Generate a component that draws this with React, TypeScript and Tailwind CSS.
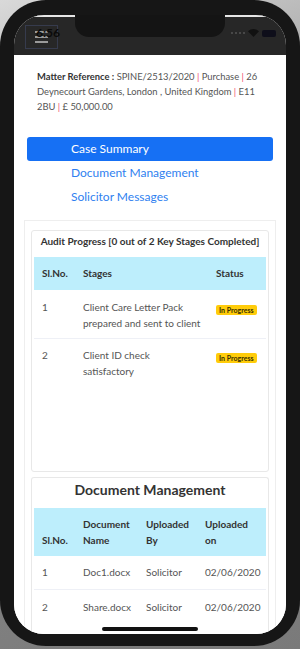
import React from "react";

const font = { fontFamily: "Lato, 'Open Sans', sans-serif" };

function Badge() {
  return (
    <span className="inline-block rounded-[2px] bg-[#ffcc0a] px-[3px] text-[7px] font-bold leading-[10px] text-[#3a3000]">
      In Progress
    </span>
  );
}

function Pipe() {
  return <span className="text-[#f0506e]">|</span>;
}

export default function App() {
  return (
    <div
      className="relative h-[649px] w-[300px] overflow-hidden bg-[linear-gradient(160deg,#d9d9d9_0%,#8a8a8a_40%,#7a7a7a_100%)]"
      style={font}
    >
      <div className="flex h-[646px] w-[300px] flex-col rounded-[46px] bg-[#161616] px-[14px] pb-[12px] pt-[15px]">
        <div className="relative flex flex-1 flex-col overflow-hidden rounded-[30px] bg-white">
          {/* status bar */}
          <div className="relative h-[40px] shrink-0 border-t-[2px] border-[#e6e6e6] bg-[#272727]">
            <div className="absolute left-[61px] top-[-2px] h-[22px] w-[150px] rounded-b-[14px] bg-[#141414]" />
            <div className="absolute left-[11px] top-[8px] flex h-[24px] w-[33px] flex-col items-center justify-center gap-[3px] border border-[#363b4d]">
              <div className="h-[2px] w-[13px] bg-[#9a9a9a]" />
              <div className="h-[2px] w-[13px] bg-[#9a9a9a]" />
              <div className="h-[2px] w-[13px] bg-[#9a9a9a]" />
            </div>
            <div className="absolute left-[22px] top-[9px] text-[12px] font-bold leading-[14px] text-[#0a0a0a]">
              6:56
            </div>
            <div className="absolute right-[10px] top-[12px] flex items-center gap-[3px]">
              <div className="flex gap-[2px]">
                <div className="h-[2px] w-[2px] rounded-full bg-[#555]" />
                <div className="h-[2px] w-[2px] rounded-full bg-[#555]" />
                <div className="h-[2px] w-[2px] rounded-full bg-[#555]" />
                <div className="h-[2px] w-[2px] rounded-full bg-[#555]" />
              </div>
              <svg width="11" height="8" viewBox="0 0 11 8">
                <path d="M5.5 8 L0 2.2 A8 8 0 0 1 11 2.2 Z" fill="#111" />
              </svg>
              <div className="h-[7px] w-[14px] rounded-[2px] bg-[#0e0e1a]" />
            </div>
          </div>

          {/* content */}
          <div className="flex flex-1 flex-col overflow-hidden bg-white">
            <div className="px-[23px] pt-[14px] text-[9.4px] leading-[15px] text-[#555]">
              <span className="font-bold text-[#333]">Matter Reference :</span>
              {"  SPINE/2513/2020 "}
              <Pipe />
              {" Purchase "}
              <Pipe />
              {" 26 Deynecourt Gardens, London , United Kingdom "}
              <Pipe />
              {" E11 2BU "}
              <Pipe />
              {" £ 50,000.00"}
            </div>

            <div className="mt-[23px] flex flex-col px-[13px]">
              <div className="flex h-[24px] items-center rounded-[3px] bg-[#1670f4] pl-[44px] text-[12px] text-white">
                Case Summary
              </div>
              <div className="flex h-[24px] items-center pl-[44px] text-[12px] text-[#2f7ff0]">
                Document Management
              </div>
              <div className="flex h-[24px] items-center pl-[44px] text-[12px] text-[#2f7ff0]">
                Solicitor Messages
              </div>
            </div>

            <div className="mx-[10px] mt-[11px] flex flex-1 flex-col gap-[5px] border-x border-t border-[#eeeeee] px-[6px] pt-[9px]">
              {/* audit card */}
              <div className="flex h-[242px] shrink-0 flex-col rounded-[3px] border border-[#e8e8e8] px-[2px]">
                <div className="pt-[3px] text-center text-[10px] font-bold leading-[14px] text-[#333]">
                  Audit Progress [0 out of 2 Key Stages Completed]
                </div>
                <div className="mt-[9px] flex h-[33px] items-center bg-[#bdeefc] text-[10px] font-bold text-[#333]">
                  <div className="w-[49px] pl-[8px]">Sl.No.</div>
                  <div className="w-[133px]">Stages</div>
                  <div className="flex-1">Status</div>
                </div>
                <div className="flex h-[49px] border-b border-[#eef0f6] pt-[9px] text-[10px] leading-[16px] text-[#555]">
                  <div className="w-[49px] pl-[8px]">1</div>
                  <div className="w-[133px]">
                    Client Care Letter Pack
                    <br />
                    prepared and sent to client
                  </div>
                  <div className="flex-1 pt-[2px]">
                    <Badge />
                  </div>
                </div>
                <div className="flex pt-[8px] text-[10px] leading-[16px] text-[#555]">
                  <div className="w-[49px] pl-[8px]">2</div>
                  <div className="w-[133px]">
                    Client ID check
                    <br />
                    satisfactory
                  </div>
                  <div className="flex-1 pt-[2px]">
                    <Badge />
                  </div>
                </div>
              </div>

              {/* document card */}
              <div className="flex flex-1 flex-col rounded-t-[3px] border-x border-t border-[#e8e8e8] px-[2px]">
                <div className="pt-[3px] text-center text-[14px] font-bold leading-[18px] text-[#333]">
                  Document Management
                </div>
                <div className="mt-[9px] flex h-[48px] items-center bg-[#bdeefc] text-[10px] font-bold leading-[16px] text-[#333]">
                  <div className="w-[49px] self-end pb-[8px] pl-[8px]">Sl.No.</div>
                  <div className="w-[63px]">
                    Document
                    <br />
                    Name
                  </div>
                  <div className="w-[59px]">
                    Uploaded
                    <br />
                    By
                  </div>
                  <div className="flex-1">
                    Uploaded
                    <br />
                    on
                  </div>
                </div>
                <div className="flex h-[34px] items-center border-b border-[#eef0f6] text-[10px] text-[#555]">
                  <div className="w-[49px] pl-[8px]">1</div>
                  <div className="w-[63px]">Doc1.docx</div>
                  <div className="w-[59px]">Solicitor</div>
                  <div className="flex-1">02/06/2020</div>
                </div>
                <div className="flex h-[34px] items-center text-[10px] text-[#555]">
                  <div className="w-[49px] pl-[8px]">2</div>
                  <div className="w-[63px]">Share.docx</div>
                  <div className="w-[59px]">Solicitor</div>
                  <div className="flex-1">02/06/2020</div>
                </div>
              </div>
            </div>
          </div>

          <div className="absolute bottom-[3px] left-[88px] h-[4px] w-[96px] rounded-full bg-[#111]" />
        </div>
      </div>
    </div>
  );
}
